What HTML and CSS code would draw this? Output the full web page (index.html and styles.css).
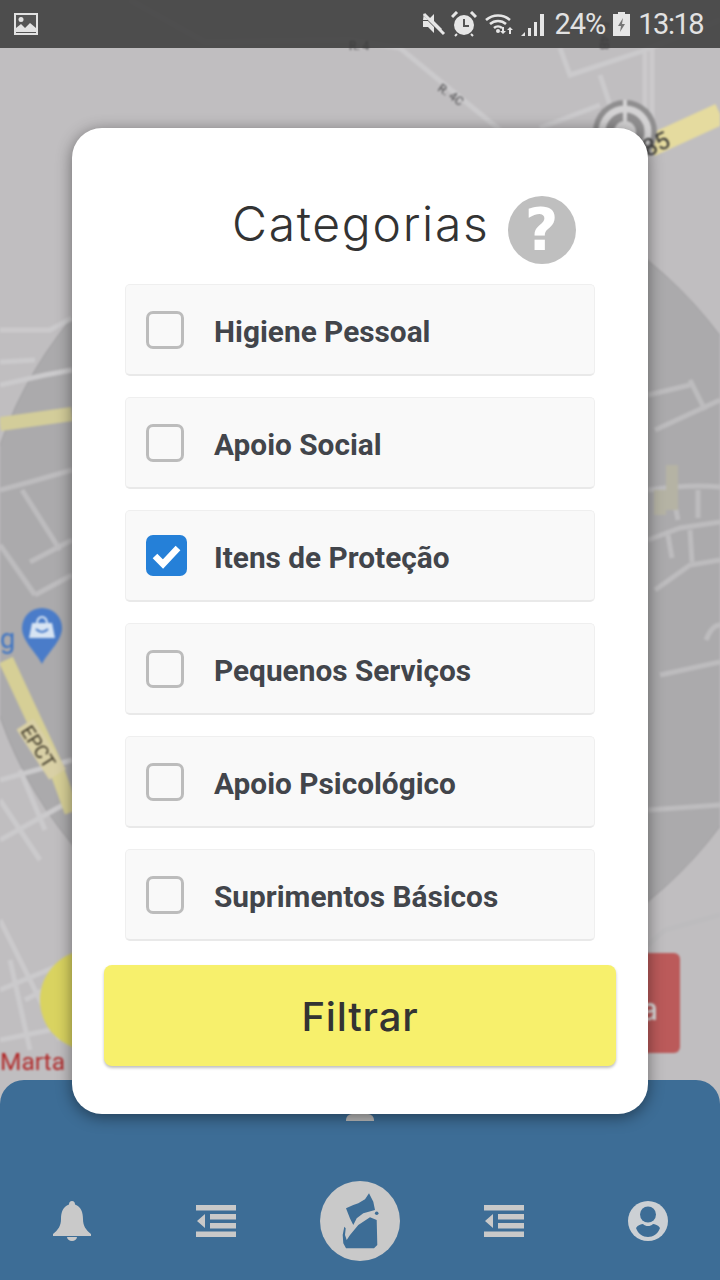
FILE: index.html
```html
<!DOCTYPE html>
<html lang="pt">
<head>
<meta charset="utf-8">
<title>Categorias</title>
<link rel="stylesheet" href="styles.css">
</head>
<body>
<div class="screen">
  <svg class="map" viewBox="0 0 720 1280" width="720" height="1280" aria-hidden="true">
    <rect width="720" height="1280" fill="#c0bec0"/>
    <circle cx="389" cy="581" r="412" fill="#abaaac" stroke="#9f9ea0" stroke-width="1"/>
    <g class="map-roads" fill="none" stroke="#cbcacc" stroke-width="5">
      <path d="M130 0 L205 42 L350 40 L400 48 L500 130"/>
      <path d="M560 48 L570 75 L640 52 L720 20"/>
      <path d="M600 75 L610 105 M645 48 V130 M652 48 V130"/>
      <path d="M540 128 L600 105"/>
      <path d="M0 330 L50 330 L72 318 M0 362 L35 360 M0 385 L45 375 L72 370"/>
      <path d="M0 780 L72 760 M0 800 L40 860 M20 770 L45 830 M0 840 L72 800"/>
      <path d="M0 920 L60 1040 M0 990 L72 960 M25 1000 L72 975 M10 960 L30 1050 M0 1040 L50 1030"/>
    </g>
    <g class="map-roads" fill="none" stroke="#bdbcbe" stroke-width="5">
      <path d="M0 490 L30 482 L72 470 M22 490 L60 550 M0 545 L35 595 M30 562 L72 540 M35 595 L72 575"/>
      <path d="M648 395 L690 385 M655 430 L720 400 M690 380 L705 410"/>
      <path d="M648 490 Q690 484 720 487 M648 540 L680 528 L720 522 M655 590 L690 565 L720 560"/>
      <path d="M672 490 L678 520 M698 490 V518 M668 535 L672 558 M690 530 L692 562"/>
      <path d="M660 675 L720 662 M706 640 Q712 625 720 625"/>
      <path d="M648 810 L720 805"/>
      <path d="M648 945 L665 930 L720 915"/>
    </g>
    <path d="M650 146 L720 114" fill="none" stroke="#e5db9f" stroke-width="22"/>
    <path d="M0 424 L72 414" fill="none" stroke="#d3cd9a" stroke-width="14"/>
    <path d="M6 660 L55 765 L72 812" fill="none" stroke="#d6cf96" stroke-width="15"/>
    <path d="M660 490 V515 M672 465 V510" fill="none" stroke="#b5b3a4" stroke-width="12"/>
    <circle cx="625" cy="132" r="32" fill="#8f8e8f"/>
    <circle cx="625" cy="132" r="23" fill="none" stroke="#d3d2d3" stroke-width="7"/>
    <circle cx="625" cy="132" r="11" fill="#d3d2d3"/>
    <path d="M625 100 V122" stroke="#d3d2d3" stroke-width="4"/>
    <text class="map-label" x="349" y="50">R. 4</text>
    <text class="map-label" transform="translate(437 90) rotate(35)">R. 4C</text>
    <text class="map-label" transform="translate(600 22) rotate(90)">R. 4B</text>
    <text class="map-label map-num" transform="translate(635 163) rotate(-25)">285</text>
    <rect x="-2" y="-16" width="60" height="20" fill="#d9d0a6" transform="translate(21 729) rotate(57)"/>
    <text class="map-label map-epct" transform="translate(20 731) rotate(57)">EPCT</text>
    <text class="map-blue" x="0" y="648">g</text>
    <path d="M42 608 a20 20 0 0 1 20 20 c0 13 -14 24 -20 36 c-6 -12 -20 -23 -20 -36 a20 20 0 0 1 20 -20z" fill="#4a7cc9"/>
    <path d="M32 623 h20 l3 15 h-26z" fill="#d7e4f3"/>
    <path d="M37 623 a5 6 0 0 1 10 0" fill="none" stroke="#d7e4f3" stroke-width="2"/>
    <path d="M36 629 q6 6 12 0" fill="none" stroke="#4a7cc9" stroke-width="2"/>
    <circle cx="90" cy="1000" r="50" fill="#d9d360"/>
    <rect x="600" y="953" width="80" height="100" rx="6" fill="#bb5a5a"/>
    <text class="map-red-btn" x="641" y="1020">a</text>
    <text class="map-marta" x="0" y="1070">Marta</text>
  </svg>

  <header class="statusbar">
    <svg class="st-img" viewBox="0 0 24 22" width="24" height="22"><path fill="#e2e2e2" d="M0 0h24v22H0z"/><path fill="#555" d="M2 2h20v18H2z"/><circle cx="7" cy="6.500" r="2.500" fill="#e2e2e2"/><path fill="#e2e2e2" d="M2 19v-4l5-4 4 4 5-5 6 5v4z"/></svg>
    <div class="st-right">
      <svg viewBox="0 0 24 24" width="24" height="24"><path fill="#e6e6e6" d="M1 8h5l6-6v7l8 8-2 2L1 3l1-2zM1 9h5l6 6v6l-6-6H1z"/><path stroke="#e6e6e6" stroke-width="3" d="M2 2l20 20"/></svg>
      <svg class="st-alarm" viewBox="0 0 26 26" width="26" height="26"><circle cx="13" cy="14" r="10" fill="#e6e6e6"/><path d="M13 8v7h5" fill="none" stroke="#555" stroke-width="2"/><path d="M1 6l5-5M25 6l-5-5" stroke="#e6e6e6" stroke-width="3"/><path d="M6 23l-2 2M20 23l2 2" stroke="#e6e6e6" stroke-width="2"/></svg>
      <svg class="st-wifi" viewBox="0 0 30 24" width="30" height="24"><g fill="none" stroke="#e6e6e6" stroke-width="2.500"><path d="M1 8a18 18 0 0 1 24 0"/><path d="M5 12a12 12 0 0 1 16 0"/><path d="M9 16a6 6 0 0 1 8 0"/></g><circle cx="13" cy="19" r="2" fill="#e6e6e6"/><path fill="#e6e6e6" d="M17 15h2v4h2l-3 3-3-3h2zM24 22h2v-4h2l-3-3-3 3h2z"/></svg>
      <svg class="st-sig" viewBox="0 0 26 24" width="26" height="24"><path fill="#e6e6e6" d="M0 24l4-4v4zM7 24v-8h3v8zM13 24V10h3v14zM19 24V2h4v22z"/></svg>
      <span class="st-pct">24%</span>
      <svg class="st-bat" viewBox="0 0 17 24" width="17" height="24"><path fill="#e6e6e6" d="M5 0h7v2h5v22H0V2h5z"/><path fill="#777" d="M10 6L5 14h3l-1 6 5-8H9z"/></svg>
      <span class="st-time">13:18</span>
    </div>
  </header>

  <nav class="bottomnav">
    <span class="handle"></span>
    <div class="navicons">
      <svg viewBox="0 0 38 40" width="38" height="40"><path fill="#c9c9c9" d="M19 0c2 0 3 1.500 3 3.500C28 6 30 11 30 18c0 7 3 11 8 15v2H0v-2c5-4 8-8 8-15C8 11 10 6 16 3.500 16 1.500 17 0 19 0z"/><path fill="#c9c9c9" d="M14 36h10a5 4 0 0 1-10 0z"/></svg>
      <svg viewBox="0 0 40 32" width="40" height="32"><path fill="#c9c9c9" d="M0 0h40v5.500H0zM14 9h26v5.500H14zM14 18h26v5.500H14zM0 26.500h40V32H0zM9 9v14L1 16z"/></svg>
      <svg viewBox="0 0 80 80" width="80" height="80"><circle cx="40" cy="40" r="40" fill="#c9c9c9"/><path fill="#3d6d96" d="M26 27.300L33.300 24L38.300 22.300L45 18.300L49 12.300L53.300 20.700L55 29L43.300 32.300L36.700 37.300L33.300 44L30 37.500z"/><path fill="#3d6d96" d="M30 54L38.300 44L50 36.300L56.700 39L57.300 64L54 67.300L26 67.300L23.300 62.300L22.700 54L24.300 45.700L25.700 47.300L25 54L26.700 59z"/><circle cx="56.700" cy="32.300" r="1.800" fill="#3d6d96"/></svg>
      <svg viewBox="0 0 40 32" width="40" height="32"><path fill="#c9c9c9" d="M0 0h40v5.500H0zM14 9h26v5.500H14zM14 18h26v5.500H14zM0 26.500h40V32H0zM9 9v14L1 16z"/></svg>
      <svg viewBox="0 0 40 40" width="40" height="40"><circle cx="20" cy="20" r="20" fill="#ccd0d4"/><circle cx="20" cy="13.500" r="8" fill="#3d6d96"/><path fill="#3d6d96" d="M8 27c2-3 5-4 7-4 1.500 1.500 3 2 5 2s3.500-.5 5-2c2 0 5 1 7 4-2 6-7 9-12 9s-10-3-12-9z"/></svg>
    </div>
  </nav>

  <section class="modal">
    <div class="modal-head">
      <h1 class="title">Categorias</h1>
      <span class="help">?</span>
    </div>
    <ul class="list">
      <li class="row"><span class="check"></span><span class="label">Higiene Pessoal</span></li>
      <li class="row"><span class="check"></span><span class="label">Apoio Social</span></li>
      <li class="row"><span class="check checked"><svg viewBox="0 0 41 41" width="41" height="41"><path d="M9 21l8 8L32 13" fill="none" stroke="#fff" stroke-width="6.500"/></svg></span><span class="label">Itens de Proteção</span></li>
      <li class="row"><span class="check"></span><span class="label">Pequenos Serviços</span></li>
      <li class="row"><span class="check"></span><span class="label">Apoio Psicológico</span></li>
      <li class="row"><span class="check"></span><span class="label">Suprimentos Básicos</span></li>
    </ul>
    <button class="filter">Filtrar</button>
  </section>
</div>
</body>
</html>
```
FILE: styles.css
```css
* { box-sizing: border-box; }
html, body { margin: 0; padding: 0; }
body { width: 720px; height: 1280px; overflow: hidden; font-family: "Roboto", "Liberation Sans", sans-serif; }

.screen { position: relative; width: 720px; height: 1280px; display: flex; flex-direction: column; justify-content: space-between; overflow: hidden; background: #c0bec0; }
.map { position: absolute; left: 0; top: 0; display: block; filter: blur(1px); }
.map-label { font: 12px "Roboto", sans-serif; fill: #4a4a4c; }
.map-num { font-size: 24px; fill: #333; }
.map-epct { font-size: 19px; fill: #3b3526; }
.map-blue { font: 27px "Roboto", sans-serif; fill: #3d74c4; }
.map-red-btn { font: 500 30px "Inter", sans-serif; fill: #dcdcdc; }
.map-marta { font: 24.500px "Roboto", sans-serif; fill: #b02a2a; }

.statusbar { position: relative; height: 48px; background: rgba(60, 60, 60, .87); display: flex; align-items: center; justify-content: space-between; padding: 0 17px 0 14px; flex: none; color: #e2e2e2; }
.st-img { display: block; }
.st-right { display: flex; align-items: center; }
.st-right svg { display: block; }
.st-alarm { margin-left: 5px; }
.st-wifi { margin-left: 8px; }
.st-sig { margin-left: 6px; }
.st-bat { margin-left: 8px; }
.st-pct { font-size: 29px; margin-left: 7px; line-height: 48px; letter-spacing: -1px; }
.st-time { font-size: 29px; margin-left: 8px; line-height: 48px; letter-spacing: -1.5px; }

.bottomnav { position: relative; height: 200px; flex: none; background: #3d6d96; border-radius: 24px 24px 0 0; }
.handle { position: absolute; left: 346px; top: 34px; width: 28px; height: 7px; background: #b9b9b9; border-radius: 6px 6px 0 0; }
.navicons { position: absolute; left: 0; right: 0; top: 101px; height: 80px; display: grid; grid-template-columns: repeat(5, 144px); align-items: center; justify-items: center; }
.navicons svg { display: block; }

.modal { position: absolute; left: 72px; top: 128px; width: 576px; height: 986px; background: #fff; border-radius: 30px; padding: 68px 32px 48px; display: flex; flex-direction: column; box-shadow: 0 3px 16px rgba(0, 0, 0, .45); }
.modal-head { display: flex; align-items: center; height: 68px; padding-left: 128px; flex: none; }
.title { margin: 0 0 12px; font: 300 48px/56px "Inter", "Open Sans", sans-serif; color: #333; letter-spacing: 1.700px; white-space: nowrap; }
.help { width: 68px; height: 68px; margin-left: 18px; border-radius: 50%; background: #bfbfbf; color: #fff; font: 700 58px/68px "DejaVu Sans", sans-serif; text-align: center; flex: none; }

.list { list-style: none; margin: 20px 21px 0; padding: 0; display: flex; flex-direction: column; gap: 21px; flex: none; }
.row { height: 92px; background: #f9f9f9; border: 1px solid #efefef; border-bottom: 2px solid #e9e9e9; border-radius: 5px; display: flex; align-items: center; padding-left: 20px; }
.check { width: 38px; height: 38px; border: 3px solid #bcbcbc; border-radius: 7px; flex: none; margin-right: 30px; }
.checked { width: 41px; height: 41px; border: 0; background: #2580d8; margin-right: 27px; overflow: hidden; }
.checked svg { display: block; }
.label { font: 700 29.800px/1 "Roboto", sans-serif; color: #42454b; white-space: nowrap; padding-top: 4px; }

.filter { margin-top: 24px; height: 101px; flex: none; width: 512px; border: 0; border-radius: 8px; background: #f7f06c; box-shadow: 0 2px 3px rgba(0, 0, 0, .25); color: #333; font: 500 40px "Inter", "Open Sans", sans-serif; letter-spacing: .8px; padding-top: 3px; }
```
